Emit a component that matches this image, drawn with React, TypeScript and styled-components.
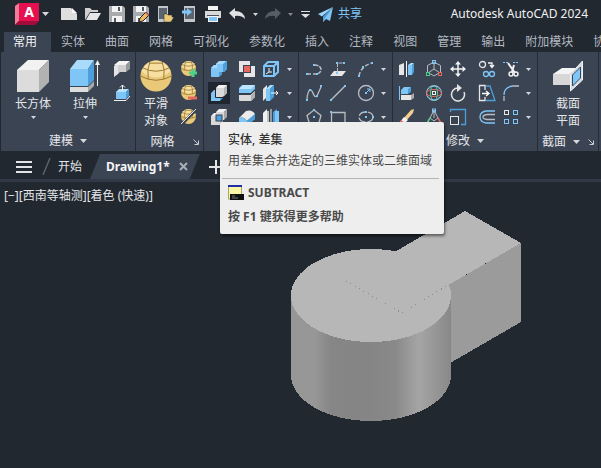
import React from "react";
import styled, { createGlobalStyle } from "styled-components";

const FONT = `"Noto Sans", "Noto Sans CJK SC", sans-serif`;
const WHITE = "#e6e6e6";
const GREY = "#b9bdc3";
const BLUE = "#7fc6f7";
const DEEP = "#4d9fdb";
const GOLD = "#e9c878";
const RED = "#e8685f";
const GREEN = "#4fd08a";

const GlobalStyle = createGlobalStyle`
  body { margin: 0; background: #212830; }
  * { box-sizing: border-box; }
  button { font: inherit; color: inherit; background: none; border: 0; padding: 0; margin: 0; }
`;

const Window = styled.div`
  position: relative;
  display: flex;
  flex-direction: column;
  min-height: 100vh;
  overflow: hidden;
  background: #212830;
  color: #e4e6e9;
  font-family: ${FONT};
  font-size: 12px;
  line-height: 16px;
`;

const TitleBar = styled.header`
  display: flex;
  align-items: center;
  height: 28px;
  padding: 0 13px 0 15px;
  white-space: nowrap;
`;

const LogoButton = styled.button`
  display: flex;
  align-items: center;
  gap: 3px;
  width: 42px;
`;

const QuickButton = styled.button<{ $width?: number }>`
  display: flex;
  align-items: center;
  justify-content: center;
  flex: none;
  width: ${(p) => p.$width ?? 24}px;
  height: 24px;
`;

const ShareButton = styled.button`
  display: flex;
  align-items: center;
  gap: 5px;
  padding-left: 4px;
  color: ${BLUE};
`;

const AppTitle = styled.h1`
  margin: 0 0 0 auto;
  font-size: 12px;
  font-weight: 400;
  color: #f0f0f0;
`;

const TabRow = styled.nav`
  display: flex;
  height: 24px;
  padding: 4px 0 0 4px;
  overflow: hidden;
`;

const Tab = styled.button<{ $active?: boolean }>`
  flex: none;
  height: 20px;
  padding: ${(p) => (p.$active ? "0 14px 0 9px" : "0 10px")};
  color: ${(p) => (p.$active ? "#f4f5f6" : "#b4b9c0")};
  background: ${(p) => (p.$active ? "#3b4453" : "transparent")};
`;

const Ribbon = styled.div`
  display: flex;
  height: 99px;
  margin-left: 1px;
  background: #3b4453;
  overflow: hidden;
`;

const Panel = styled.section<{ $width: number }>`
  display: flex;
  flex-direction: column;
  justify-content: space-between;
  flex: none;
  width: ${(p) => p.$width}px;
  border-right: 1px solid #252c36;
`;

const PanelBody = styled.div<{ $indent?: number }>`
  display: flex;
  padding-left: ${(p) => p.$indent ?? 0}px;
`;

const BigButton = styled.button<{ $width: number }>`
  display: flex;
  flex-direction: column;
  align-items: center;
  width: ${(p) => p.$width}px;
  padding-top: 8px;
`;

const BigLabel = styled.span`
  margin: 3px 0 4px;
  line-height: 17px;
`;

const ToolGrid = styled.div<{ $columns: string }>`
  display: grid;
  grid-template-columns: ${(p) => p.$columns};
  grid-auto-rows: 24px;
  align-items: center;
  justify-items: end;
  padding-top: 5px;
`;

const ToolButton = styled.button<{ $active?: boolean }>`
  display: flex;
  align-items: center;
  justify-content: center;
  width: 22px;
  height: 22px;
  background: ${(p) => (p.$active ? "#1f2630" : "transparent")};
`;

const DropButton = styled.button`
  display: flex;
  align-items: center;
  justify-content: center;
  justify-self: stretch;
  height: 22px;
`;

const PanelFooter = styled.div`
  display: flex;
  align-items: center;
  height: 20px;
`;

const PanelTitle = styled.button`
  display: flex;
  flex: 1;
  align-items: center;
  justify-content: center;
  gap: 7px;
`;

const CornerButton = styled.button`
  display: flex;
  width: 14px;
  padding-left: 4px;
`;

const FileTabs = styled.nav`
  display: flex;
  height: 31px;
  padding: 3px 0 0 16px;
  border-bottom: 3px solid #313946;
`;

const MenuButton = styled.button`
  display: flex;
  align-items: center;
  width: 16px;
`;

const SlashMark = styled.span`
  display: flex;
  align-items: center;
  margin: 0 7px 0 10px;
`;

const FileTab = styled.button`
  padding: 0 8px 0 0;
`;

const ActiveFileTab = styled.div`
  display: flex;
  align-items: center;
  gap: 9px;
  padding: 0 12px 0 16px;
  background: #3b4453;
  clip-path: polygon(10px 0, 100% 0, calc(100% - 10px) 100%, 0 100%);
  font-weight: 700;
  color: #f4f5f6;
`;

const AddButton = styled.button`
  display: flex;
  align-items: center;
  padding-left: 9px;
`;

const Viewport = styled.main`
  position: relative;
  flex: 1;
  min-height: 286px;
  padding: 6px 4px;
`;

const ViewControls = styled.div`
  display: flex;
`;

const Model = styled.svg`
  position: absolute;
  left: 290px;
  top: 28px;
`;

const Tooltip = styled.div`
  position: absolute;
  left: 220px;
  top: 122px;
  padding: 9px 5px 5px 2px;
  border-radius: 2px;
  background: #eeeeee;
  color: #4a4a4a;
  box-shadow: 1px 2px 3px rgba(0, 0, 0, 0.5);
  white-space: nowrap;
`;

const TipLine = styled.div<{ $strong?: boolean }>`
  display: flex;
  align-items: center;
  gap: 4px;
  height: 24px;
  padding: 0 7px 0 6px;
  font-weight: ${(p) => (p.$strong ? 700 : 400)};
`;

const TipHeading = styled(TipLine)`
  height: 18px;
  font-weight: 500;
  color: #333333;
`;

const TipRule = styled.hr`
  height: 1px;
  margin: 5px 0 2px;
  border: 0;
  background: #b4b4b4;
`;

/* ---------- drawings ---------- */

const Icon = ({ size = 18, children }: { size?: number; children: React.ReactNode }) => (
  <svg width={size} height={size} viewBox={`0 0 ${size} ${size}`} fill="none" aria-hidden="true">
    {children}
  </svg>
);

const Arrow = ({ big, color = "#d5d8dc" }: { big?: boolean; color?: string }) => (
  <svg width={big ? 7 : 5} height={big ? 4 : 3} viewBox="0 0 7 4" aria-hidden="true">
    <path d="M0 0H7L3.5 4Z" fill={color} />
  </svg>
);

const Corner = () => (
  <svg width="6" height="6" viewBox="0 0 6 6" fill="none" stroke="#c8ccd1" aria-hidden="true">
    <path d="M.5 .5L5 5M5.5 1.5V5.5H1.5" />
  </svg>
);

type CubeProps = { x: number; y: number; s: number; d: number; blue?: boolean };
const Cube = ({ x, y, s, d, blue }: CubeProps) => {
  const [front, top, side] = blue ? [BLUE, "#a5dafc", DEEP] : ["#d9d9d9", "#f1f1f1", "#a9a9a9"];
  return (
    <>
      <path d={`M${x} ${y + d}h${s}v${s}h${-s}z`} fill={front} />
      <path d={`M${x} ${y + d}l${d} ${-d}h${s}l${-d} ${d}z`} fill={top} />
      <path d={`M${x + s} ${y + d}l${d} ${-d}v${s}l${-d} ${d}z`} fill={side} />
    </>
  );
};

const Nodes = ({ at }: { at: number[][] }) => (
  <>
    {at.map(([x, y]) => (
      <rect key={`${x}-${y}`} x={x - 1} y={y - 1} width="2" height="2" fill={BLUE} />
    ))}
  </>
);

const Sphere = ({ cx, cy, r }: { cx: number; cy: number; r: number }) => (
  <>
    <circle cx={cx} cy={cy} r={r} fill={GOLD} />
    <path
      d={`M${cx - r * 0.94} ${cy - r * 0.3}Q${cx} ${cy + r * 0.5} ${cx + r * 0.94} ${cy - r * 0.3}L${cx + r * 0.7} ${cy - r * 0.7}Q${cx} ${cy - r * 1.3} ${cx - r * 0.7} ${cy - r * 0.7}Z`}
      fill="#f6dfa0"
    />
    <g stroke="#9c7a35" strokeWidth={r > 10 ? 1 : 0.8}>
      <path d={`M${cx - r} ${cy}Q${cx} ${cy + r * 0.55} ${cx + r} ${cy}`} />
      <path d={`M${cx - r * 0.85} ${cy - r * 0.52}Q${cx} ${cy - r * 0.1} ${cx + r * 0.85} ${cy - r * 0.52}`} />
      <path d={`M${cx - r * 0.4} ${cy - r * 0.9}Q${cx - r * 0.6} ${cy - r * 0.4} ${cx - r * 0.5} ${cy + r * 0.2}`} />
      <path d={`M${cx + r * 0.4} ${cy - r * 0.9}Q${cx + r * 0.6} ${cy - r * 0.4} ${cx + r * 0.5} ${cy + r * 0.2}`} />
      <path d={`M${cx - r * 0.45} ${cy - r * 0.83}H${cx + r * 0.45}`} />
    </g>
  </>
);

const BoxIcon = () => (
  <Icon size={32}>
    <path d="M0 10L22 10V32H0Z" fill="#dcdcdc" />
    <path d="M0 10L11 0H32L22 10Z" fill="#f2f2f2" />
    <path d="M22 10L32 0V22L22 32Z" fill="#b2b2b2" />
  </Icon>
);

const ExtrudeIcon = () => (
  <Icon size={32}>
    <path d="M1 27H19V32H1Z" fill="#dedede" />
    <path d="M19 27L25 21V26L19 32Z" fill="#a8a8a8" />
    <path d="M1 9H19V26H1Z" fill={BLUE} />
    <path d="M1 9L8 0H25L19 9Z" fill="#a9dcfc" />
    <path d="M19 9L25 0V20L19 26Z" fill={DEEP} />
    <path d="M28.5 26V3" stroke="#f2f2f2" />
    <path d="M26 5L28.500 0L31 5Z" fill="#f2f2f2" />
  </Icon>
);

const PolysolidIcon = () => (
  <Icon>
    <path d="M1 6L5 3V14L1 17Z" fill="#e4e4e4" />
    <path d="M1 5L6 1H17L13 5Z" fill="#f4f4f4" />
    <path d="M5 5H13V12H7L5 14Z" fill="#cfcfcf" />
    <path d="M13 5L17 1V9L13 12Z" fill="#989898" />
  </Icon>
);

const PressPullIcon = () => (
  <Icon>
    <path d="M3 8H13V15H3Z" fill={BLUE} />
    <path d="M3 8L6 5H16L13 8Z" fill="#b3e0fc" />
    <path d="M13 8L16 5V12L13 15Z" fill={DEEP} />
    <path d="M9.500 7V1M7 3.500L9.500 1L12 3.500M1 16.500H13L17 12" stroke="#f0f0f0" />
  </Icon>
);

const MeshIcon = ({ mark }: { mark: "more" | "less" | "refine" }) => (
  <Icon>
    <Sphere cx={8.5} cy={8.5} r={7.5} />
    {mark === "more" && <path d="M13 9V17M9 13H17" stroke={GREEN} strokeWidth="3" />}
    {mark === "less" && <path d="M8 14H17" stroke={RED} strokeWidth="3" />}
    {mark === "refine" && (
      <>
        <path d="M1 17L17 1" stroke="#3b4453" strokeWidth="3" />
        <path d="M1 16L16 1" stroke="#e6e6e6" />
      </>
    )}
  </Icon>
);

const UnionIcon = () => (
  <Icon>
    <path d="M1 9Q1 8 2 7L4 5H6V4L8 2Q9 1 10 1H16Q17 1 17 2V9L14 12H12V14L10 16Q9 17 8 17H2Q1 17 1 16Z" fill={BLUE} />
    <path d="M4 5H6V4L8 2Q9 1 10 1H16L13 4H7V8H1L4 5Z" fill="#a5dafc" />
    <path d="M13 4L17 1V9L14 12H13ZM9 12H12V14L9 17Z" fill={DEEP} />
  </Icon>
);
const SubtractIcon = () => (
  <Icon>
    <path d="M1 9L4 6H5V13Q5 14 6 14H10V17H1Z" fill={BLUE} />
    <path d="M10 14H13L10 17Z" fill={DEEP} />
    <path d="M6 5Q6 4 7 3L9 1H16Q17 1 17 2V9L14 12Q13 13 12 13H6Z" fill="#d9d9d9" />
    <path d="M6 4L9 1H17L14 4Z" fill="#f1f1f1" />
    <path d="M14 4L17 1V9L14 12Z" fill="#b5b5b5" />
  </Icon>
);
const IntersectIcon = () => (
  <Icon>
    <Cube x={1} y={5} s={9} d={3} />
    <Cube x={6} y={1} s={8} d={3} />
    <rect x="6" y="7" width="6" height="6" fill={DEEP} stroke="#3b4453" />
  </Icon>
);
const InterfereIcon = () => (
  <Icon>
    <path d="M1 1H12V12H1ZM6 6H17V17H6Z" fill={WHITE} />
    <path d="M5 5H12V6H13V13H6V12H5Z" fill="#3b4453" />
    <path d="M6 6H12V12H6Z" fill={RED} />
  </Icon>
);
const SliceIcon = () => (
  <Icon>
    <path d="M1 5Q1 4 2 3L4 1H16Q17 1 17 2V5L13 9H1Z" fill={BLUE} />
    <path d="M1 5L5 1H17L13 5Z" fill="#bfe5fd" />
    <path d="M1 11H12L17 7V13L13 17H2Q1 17 1 16Z" fill="#d8d8d8" />
    <path d="M13 11L17 7V13L13 17Z" fill="#b0b0b0" />
    <path d="M1 10H12.500L17 6" stroke="#2d3541" />
  </Icon>
);
const FilletEdgeIcon = () => (
  <Icon>
    <path d="M1 10L8 3Q14 1 17 6L9 13Q6 8 1 10Z" fill="#ececec" />
    <path d="M1 10Q6 8 9 13L17 6V11L9 17L6 14H1Z" fill={BLUE} />
    <path d="M9 13L17 6V11L9 17Z" fill={DEEP} />
  </Icon>
);
const ExtractIcon = () => (
  <Icon>
    <path d="M2 6H12V16H2ZM2 6L6 2H16L12 6M12 16L16 12V2" stroke={BLUE} strokeWidth="2" strokeLinejoin="round" />
    <path d="M7 8V12M4 14L7 12H10" stroke="#e3f3ff" />
  </Icon>
);
const ExtrudeFaceIcon = () => (
  <Icon>
    <path d="M1 5L5 1V13L1 17Z" fill="#e5e5e5" />
    <path d="M4 5L8 1H12L8 5Z" fill="#a7ddfc" />
    <path d="M4 5H8V17H4Z" fill={BLUE} />
    <path d="M8 5L12 1V13L8 17Z" fill={DEEP} />
    <path d="M9 9H16M14 7L16 9L14 11" stroke="#fff" />
  </Icon>
);
const SeparateIcon = () => (
  <Icon>
    <path d="M1 5L5 1V14L1 17Z" fill="#f1f1f1" />
    <path d="M5 3H7V16H5Z" fill="#c4c4c4" />
    <path d="M9 1V17" stroke="#f0f0f0" />
    <path d="M11 4L15 1V14L11 17Z" fill={DEEP} />
    <path d="M13 3H17V15H13Z" fill={BLUE} />
  </Icon>
);

const PolylineIcon = () => (
  <Icon>
    <path d="M2 14H7M8 14H12Q16 13 16 9Q15 5 9 5" stroke={GREY} strokeWidth="1.500" strokeDasharray="4 1" />
    <Nodes at={[[2, 14], [12, 14], [9, 5]]} />
  </Icon>
);
const PlanarIcon = () => (
  <Icon>
    <path d="M1 16L5 11H17L13 16Z" fill={WHITE} />
    <path d="M8.500 12V3H14" stroke={GREY} strokeDasharray="4 1" />
    <Nodes at={[[8, 3], [15, 3], [8, 13]]} />
  </Icon>
);
const ArcIcon = () => (
  <Icon>
    <path d="M2 16Q4 6 15 3" stroke={GREY} strokeWidth="1.500" strokeDasharray="4 2" />
    <Nodes at={[[2, 16], [6, 7], [15, 3]]} />
  </Icon>
);
const SplineIcon = () => (
  <Icon>
    <path d="M2 16C2 10 4 5 6 6S9 15 12 12L16 3" stroke={GREY} strokeWidth="1.300" />
    <Nodes at={[[2, 16], [5, 6], [12, 12], [16, 2]]} />
  </Icon>
);
const LineIcon = () => (
  <Icon>
    <path d="M2 16L16 2" stroke={GREY} strokeWidth="1.500" />
    <Nodes at={[[2, 16], [16, 2]]} />
  </Icon>
);
const CircleIcon = () => (
  <Icon>
    <circle cx="9" cy="9" r="7.500" stroke={GREY} strokeWidth="1.300" />
    <path d="M9 9L13 5M10 5H13V8" stroke={BLUE} />
    <Nodes at={[[9, 9]]} />
  </Icon>
);
const PolygonIcon = () => (
  <Icon>
    <path d="M9 2L16 7.500L13.500 16H4.500L2 7.500Z" stroke={GREY} strokeWidth="1.300" />
    <Nodes at={[[9, 9], [9, 2]]} />
  </Icon>
);
const RectIcon = () => (
  <Icon>
    <path d="M2.500 4.500H16V15.500H2.500Z" stroke={GREY} strokeWidth="1.300" />
    <Nodes at={[[2, 4], [16, 15]]} />
  </Icon>
);
const EllipseIcon = () => (
  <Icon>
    <ellipse cx="9" cy="9" rx="7" ry="5" stroke={GREY} strokeWidth="1.300" strokeDasharray="8 2" />
    <Nodes at={[[9, 9], [9, 4], [16, 9]]} />
  </Icon>
);

const MirrorIcon = () => (
  <Icon>
    <path d="M2 5L7 3V15H2Z" fill={WHITE} />
    <path d="M9.500 1V17" stroke="#f4f4f4" />
    <path d="M11 5H15V15H11Z" fill={BLUE} />
    <path d="M11 5L14 3H17L15 5Z" fill="#b3e0fc" />
    <path d="M15 5L17 3V12L15 15Z" fill={DEEP} />
  </Icon>
);
const AlignIcon = () => (
  <Icon>
    <path d="M2.500 2V16" stroke={BLUE} />
    <path d="M4 6L7 3H14L11 6V10H4Z" fill={BLUE} />
    <path d="M11 6L14 3V8L11 10Z" fill={DEEP} />
    <path d="M4 11H14V16H4Z" fill={WHITE} />
    <path d="M14 11L17 9V14L14 16Z" fill="#aaa" />
  </Icon>
);
const EraseIcon = () => (
  <Icon>
    <path d="M6 11L14 2L17 1L16 5L9 13Z" fill="#f4cf91" />
    <path d="M3 14L7 9L11 12L7 16Z" fill="#f5f5f5" />
    <path d="M2 15L4 12L8 15L6 17Z" fill={RED} />
  </Icon>
);
const MoveGizmoIcon = () => (
  <Icon>
    <path d="M9 2L15.500 5.500V12L9 16L2.500 12V5.500ZM9 9V3M9 9L3 13M9 9L15 13" stroke={GREY} />
    <rect x="7.500" y=".5" width="3" height="3" stroke={BLUE} />
    <rect x="1.500" y="12.500" width="3" height="3" stroke={GREEN} />
    <rect x="13.500" y="12.500" width="3" height="3" stroke={RED} />
  </Icon>
);
const RotateGizmoIcon = () => (
  <Icon>
    <circle cx="9" cy="9" r="7.500" stroke={GREY} />
    <ellipse cx="9" cy="9" rx="7.500" ry="3.500" stroke={RED} />
    <ellipse cx="9" cy="9" rx="3.500" ry="7.500" stroke={GREEN} />
    <path d="M2 6Q9 -2 16 6M2 12Q9 20 16 12" stroke={BLUE} />
    <rect x="7.500" y="7.500" width="3" height="3" fill="#3b4453" stroke="#eee" />
  </Icon>
);
const ScaleGizmoIcon = () => (
  <Icon>
    <path d="M9 2L5 10L2 15M9 2L13 10M9 2V10M5 10L9 13L13 10" stroke={GREY} />
    <path d="M5 10L2 15H9" stroke={GREEN} strokeWidth="1.500" />
    <path d="M13 10L16 15H9" stroke={RED} strokeWidth="1.500" />
    <rect x="7.500" y="1" width="3" height="3" stroke={BLUE} />
  </Icon>
);
const MoveIcon = () => (
  <Icon>
    <path d="M9 3V15M3 9H15" stroke="#f4f4f4" strokeWidth="1.500" />
    <path d="M9 1L12 4.500H6ZM9 17L12 13.500H6ZM1 9L4.500 6V12ZM17 9L13.500 6V12Z" fill="#f4f4f4" />
  </Icon>
);
const RotateIcon = () => (
  <Icon>
    <path d="M9 4A6.500 6.500 0 1 0 15 8" stroke="#e4e4e4" strokeWidth="1.500" />
    <path d="M8 0L13 4L8 8Z" fill="#e4e4e4" />
  </Icon>
);
const ScaleIcon = () => (
  <Icon>
    <path d="M1.500 4V1.500H16.500V16.500H12" stroke={DEEP} strokeWidth="1.300" />
    <rect x="1.500" y="8.500" width="8" height="8" stroke={WHITE} />
  </Icon>
);
const CopyIcon = () => (
  <Icon>
    <circle cx="4.500" cy="4.500" r="3" stroke={WHITE} strokeWidth="1.300" />
    <circle cx="8" cy="14" r="2.500" stroke={BLUE} strokeWidth="1.300" />
    <circle cx="14" cy="14" r="2.500" stroke={BLUE} strokeWidth="1.300" />
    <path d="M10 3H14V7M12 5L14 7.500L16 5" stroke="#f4f4f4" strokeWidth="1.300" />
  </Icon>
);
const StretchIcon = () => (
  <Icon>
    <path d="M7 6V1.500H1.500V16.500H7V13" stroke={WHITE} strokeWidth="1.300" />
    <path d="M8 2H12L17 16.500H8" stroke={DEEP} strokeWidth="1.300" />
    <path d="M4 9.500H10M8 7L11 9.500L8 12" stroke="#fff" strokeWidth="1.300" />
  </Icon>
);
const OffsetIcon = () => (
  <Icon>
    <path d="M17 3H8Q2 4 2 9T8 15H17" stroke={BLUE} strokeWidth="1.300" />
    <path d="M17 6.500H9Q5 7 5 9T9 11.500H17" stroke={GREY} strokeWidth="1.300" />
  </Icon>
);
const TrimIcon = () => (
  <Icon>
    <path d="M1 2.500H7M11 2.500H17" stroke={BLUE} strokeDasharray="2 1" />
    <path d="M6 3L13 13M12 5L10 12" stroke="#f2f2f2" strokeWidth="2" />
    <circle cx="9" cy="14" r="2" stroke="#f2f2f2" strokeWidth="1.500" />
    <circle cx="14" cy="14" r="2" stroke="#f2f2f2" strokeWidth="1.500" />
  </Icon>
);
const FilletIcon = () => (
  <Icon>
    <path d="M2 17V12M11 2H17" stroke={GREY} strokeWidth="1.300" />
    <path d="M2 11Q2 3 11 2" stroke={BLUE} strokeWidth="1.300" />
  </Icon>
);
const ArrayIcon = () => (
  <Icon>
    <rect x="2.500" y="2.500" width="4" height="4" stroke={WHITE} />
    <rect x="11.500" y="2.500" width="4" height="4" stroke={BLUE} />
    <rect x="2.500" y="11.500" width="4" height="4" stroke={BLUE} />
    <rect x="11.500" y="11.500" width="4" height="4" stroke={BLUE} />
  </Icon>
);
const SectionIcon = () => (
  <Icon size={32}>
    <path d="M1 14L10 8H26L18 14Z" fill="#f4f4f4" />
    <path d="M1 14H18V25H1Z" fill="#d7d7d7" />
    <path d="M18 14L25 9V20L18 26Z" fill="#a8a8a8" />
    <path d="M18.500 31V14L30.500 1V20Z" fill="#d3d9df" stroke="#f1f1f1" />
    <path d="M20.500 26V15L28.500 7V18Z" fill={BLUE} stroke="#34495c" />
  </Icon>
);

const LogoIcon = () => (
  <svg width="24" height="22" viewBox="0 0 24 22" aria-hidden="true">
    <path d="M0 3L4 0V18L0 22Z" fill="#f57b96" />
    <path d="M4 0H24V18H4Z" fill="#e51050" />
    <path d="M4 18H24L20 22H0Z" fill="#a30b38" />
    <text x="14" y="14" textAnchor="middle" fontFamily="Noto Sans, sans-serif" fontWeight="700" fontSize="14" fill="#fff">
      A
    </text>
  </svg>
);
const NewIcon = () => (
  <Icon>
    <path d="M1 3H11L17 9V15H1Z" fill="#dedede" />
    <path d="M12 3L17 8H12Z" fill="#f7f7f7" />
  </Icon>
);
const OpenIcon = () => (
  <Icon>
    <path d="M1 15V3H6L8 5H14V7H6Z" fill="#cfcfcf" />
    <path d="M2 15L6 8H17L13 15Z" fill="#e6e6e6" />
  </Icon>
);
const SaveIcon = ({ pencil }: { pencil?: boolean }) => (
  <Icon>
    <path d="M1 1H15L17 3V17H1Z" fill="#a9abae" />
    <path d="M4 1H14V7H4ZM4 11H14V17H4Z" fill="#f3f3f3" />
    <path d="M10 2H12V6H10ZM6 13H8V17H6Z" fill="#4f565f" />
    {pencil && (
      <>
        <path d="M7 17L8 13L14 7L17 10L11 16Z" fill="#efb75e" stroke="#212830" />
        <path d="M14 7L17 10L16 11L13 8Z" fill={RED} />
      </>
    )}
  </Icon>
);
const MobileIcon = ({ kind }: { kind: "open" | "save" }) => (
  <Icon>
    <path d={kind === "open" ? "M2 1H12V17H2Z" : "M4 1H15V17H4Z"} fill="#c3c5c8" />
    <path d={kind === "open" ? "M3 3H11V14H3Z" : "M5 3H14V14H5Z"} fill="#5b636d" />
    {kind === "open" ? (
      <path d="M8 17V9H11L12 10H16V12H18L15 17Z" fill={GOLD} stroke="#212830" strokeWidth=".5" />
    ) : (
      <path d="M2 5.500H7V3L12 7L7 11V8.500H2Z" fill={BLUE} />
    )}
  </Icon>
);
const PrintIcon = () => (
  <Icon>
    <path d="M4 1H14V5H4Z" fill="#f4f4f4" />
    <path d="M1 6H17V13H1Z" fill="#d8d8d8" />
    <path d="M3 10H15V11H3Z" fill="#4a515b" />
    <path d="M4 11H14V17H4Z" fill="#f4f4f4" />
    <path d="M5 12H13V16H5Z" fill={BLUE} />
  </Icon>
);
const UndoIcon = ({ redo }: { redo?: boolean }) => (
  <Icon>
    <path
      d={redo ? "M17 8L11 3V6Q2 6 1 14Q5 10 11 11V14Z" : "M1 8L7 3V6Q16 6 17 14Q13 10 7 11V14Z"}
      fill={redo ? "#565d67" : "#dfe1e4"}
    />
  </Icon>
);
const CustomizeIcon = () => (
  <svg width="9" height="7" viewBox="0 0 9 7" aria-hidden="true">
    <path d="M0 0H9V1H0ZM0 3H9L4.500 7Z" fill="#dcdfe2" />
  </svg>
);
const ShareIcon = () => (
  <svg width="15" height="15" viewBox="0 0 15 15" aria-hidden="true">
    <path d="M15 0L0 7L4 9.500Z" fill="#9bd5fb" />
    <path d="M15 0L5 10V15L8 12L12 14Z" fill={BLUE} />
    <path d="M15 0L5 10V15L7 11Z" fill={DEEP} />
  </svg>
);
const CommandIcon = () => (
  <svg width="16" height="16" viewBox="0 0 16 16" aria-hidden="true">
    <rect x=".5" y="1" width="13" height="13" fill="#fbf6a5" stroke="#a5a56f" />
    <path d="M0 0H14V2H0Z" fill="#1f2fa8" />
    <path d="M2 9H16V15H2Z" fill="#111" />
    <path d="M4 11H7M4 13H10" stroke="#777" />
  </svg>
);

/* ---------- data ---------- */

const ribbonTabs = ["常用", "实体", "曲面", "网格", "可视化", "参数化", "插入", "注释", "视图", "管理", "输出", "附加模块", "协作"];

type Tool = [string, React.ReactNode];

const quickTools: Tool[] = [
  ["新建", <NewIcon />],
  ["打开", <OpenIcon />],
  ["保存", <SaveIcon />],
  ["另存为", <SaveIcon pencil />],
  ["从移动设备打开", <MobileIcon kind="open" />],
  ["保存到移动设备", <MobileIcon kind="save" />],
  ["打印", <PrintIcon />],
  ["放弃", <UndoIcon />],
];

const solidRows: Tool[][] = [
  [["并集", <UnionIcon />], ["干涉", <InterfereIcon />], ["提取边", <ExtractIcon />]],
  [["差集", <SubtractIcon />], ["剖切", <SliceIcon />], ["拉伸面", <ExtrudeFaceIcon />]],
  [["交集", <IntersectIcon />], ["圆角边", <FilletEdgeIcon />], ["分割", <SeparateIcon />]],
];

const drawRows: Tool[][] = [
  [["多段线", <PolylineIcon />], ["平面曲面", <PlanarIcon />], ["圆弧", <ArcIcon />]],
  [["样条曲线", <SplineIcon />], ["直线", <LineIcon />], ["圆", <CircleIcon />]],
  [["多边形", <PolygonIcon />], ["矩形", <RectIcon />], ["椭圆", <EllipseIcon />]],
];

const modifyRows: Tool[][] = [
  [["三维镜像", <MirrorIcon />], ["三维移动", <MoveGizmoIcon />], ["移动", <MoveIcon />], ["复制", <CopyIcon />], ["修剪", <TrimIcon />]],
  [["三维对齐", <AlignIcon />], ["三维旋转", <RotateGizmoIcon />], ["旋转", <RotateIcon />], ["拉伸", <StretchIcon />], ["圆角", <FilletIcon />]],
  [["删除", <EraseIcon />], ["三维缩放", <ScaleGizmoIcon />], ["缩放", <ScaleIcon />], ["偏移", <OffsetIcon />], ["阵列", <ArrayIcon />]],
];

const Tools = ({ rows, columns, active }: { rows: Tool[][]; columns: string; active?: string }) => (
  <ToolGrid $columns={columns}>
    {rows.map((row, i) => (
      <React.Fragment key={i}>
        {row.map(([name, icon]) => (
          <ToolButton key={name} aria-label={name} $active={name === active}>
            {icon}
          </ToolButton>
        ))}
        <DropButton aria-label="更多">
          <Arrow />
        </DropButton>
      </React.Fragment>
    ))}
  </ToolGrid>
);

const Footer = ({ title, arrow, corner }: { title: string; arrow?: boolean; corner?: boolean }) => (
  <PanelFooter>
    <PanelTitle>
      {title}
      {arrow && <Arrow big />}
    </PanelTitle>
    {corner && (
      <CornerButton aria-label={`${title}设置`}>
        <Corner />
      </CornerButton>
    )}
  </PanelFooter>
);

const SolidModel = () => (
  <Model width="232" height="212" viewBox="0 0 232 212" role="img" aria-label="三维模型" shapeRendering="crispEdges">
    <defs>
      <linearGradient id="side" x1="0" x2="1" y1="0" y2="0">
        <stop offset="0" stopColor="#969696" />
        <stop offset=".15" stopColor="#979797" />
        <stop offset=".25" stopColor="#868686" />
        <stop offset=".48" stopColor="#858585" />
        <stop offset=".65" stopColor="#898989" />
        <stop offset=".8" stopColor="#a5a5a5" />
        <stop offset=".9" stopColor="#979797" />
        <stop offset="1" stopColor="#888888" />
      </linearGradient>
    </defs>
    <path d="M148 81L231 33V112L148 160Z" fill="#9b9b9b" />
    <path d="M1 86V165A80 46 0 0 0 161 165V86Z" fill="url(#side)" />
    <ellipse cx="81" cy="85.500" rx="80" ry="46.500" fill="#b7b7b7" />
    <path d="M108 40L175 1L231 33L160 74L112 103L56 71Z" fill="#b7b7b7" />
    <path d="M56 71L112 103L158 75" fill="none" stroke="#8c8c8c" strokeDasharray="1 4" />
  </Model>
);

export default function App() {
  return (
    <Window>
      <GlobalStyle />
      <TitleBar>
        <LogoButton aria-label="应用程序菜单">
          <LogoIcon />
          <Arrow big />
        </LogoButton>
        {quickTools.map(([name, icon]) => (
          <QuickButton key={name} aria-label={name}>
            {icon}
          </QuickButton>
        ))}
        <QuickButton $width={12} aria-label="放弃列表">
          <Arrow />
        </QuickButton>
        <QuickButton aria-label="重做">
          <UndoIcon redo />
        </QuickButton>
        <QuickButton $width={11} aria-label="重做列表">
          <Arrow color="#858b93" />
        </QuickButton>
        <QuickButton $width={18} aria-label="自定义">
          <CustomizeIcon />
        </QuickButton>
        <ShareButton>
          <ShareIcon />
          共享
        </ShareButton>
        <AppTitle>Autodesk AutoCAD 2024</AppTitle>
      </TitleBar>

      <TabRow>
        {ribbonTabs.map((tab, i) => (
          <Tab key={tab} $active={i === 0}>
            {tab}
          </Tab>
        ))}
      </TabRow>

      <Ribbon>
        <Panel $width={135}>
          <PanelBody $indent={6}>
            <BigButton $width={52}>
              <BoxIcon />
              <BigLabel>长方体</BigLabel>
              <Arrow />
            </BigButton>
            <BigButton $width={52}>
              <ExtrudeIcon />
              <BigLabel>拉伸</BigLabel>
              <Arrow />
            </BigButton>
            <ToolGrid $columns="22px">
              <ToolButton aria-label="多段体">
                <PolysolidIcon />
              </ToolButton>
              <ToolButton aria-label="按住并拖动">
                <PressPullIcon />
              </ToolButton>
            </ToolGrid>
          </PanelBody>
          <Footer title="建模" arrow />
        </Panel>

        <Panel $width={68}>
          <PanelBody>
            <BigButton $width={40}>
              <Icon size={32}>
                <Sphere cx={16} cy={16} r={15.5} />
              </Icon>
              <BigLabel>
                平滑
                <br />
                对象
              </BigLabel>
            </BigButton>
            <ToolGrid $columns="24px">
              <ToolButton aria-label="提高平滑度">
                <MeshIcon mark="more" />
              </ToolButton>
              <ToolButton aria-label="降低平滑度">
                <MeshIcon mark="less" />
              </ToolButton>
              <ToolButton aria-label="优化网格">
                <MeshIcon mark="refine" />
              </ToolButton>
            </ToolGrid>
          </PanelBody>
          <Footer title="网格" corner />
        </Panel>

        <Panel $width={95}>
          <Tools rows={solidRows} columns="26px 28px 24px 14px" active="差集" />
        </Panel>
        <Panel $width={94}>
          <Tools rows={drawRows} columns="26px 24px 28px 13px" />
        </Panel>
        <Panel $width={145}>
          <Tools rows={modifyRows} columns="24px 28px 24px 29px 24px 12px" />
          <Footer title="修改" arrow />
        </Panel>

        <Panel $width={61}>
          <PanelBody>
            <BigButton $width={60}>
              <SectionIcon />
              <BigLabel>
                截面
                <br />
                平面
              </BigLabel>
            </BigButton>
          </PanelBody>
          <Footer title="截面" arrow corner />
        </Panel>
      </Ribbon>

      <FileTabs>
        <MenuButton aria-label="菜单">
          <svg width="16" height="12" viewBox="0 0 16 12" aria-hidden="true">
            <path d="M0 1H16M0 6H16M0 11H16" stroke="#e2e4e7" strokeWidth="2" />
          </svg>
        </MenuButton>
        <SlashMark>
          <svg width="9" height="17" viewBox="0 0 9 17" aria-hidden="true">
            <path d="M1 17L8 0" stroke="#59616d" strokeWidth="1.500" />
          </svg>
        </SlashMark>
        <FileTab>开始</FileTab>
        <ActiveFileTab>
          Drawing1*
          <button aria-label="关闭">
            <svg width="9" height="9" viewBox="0 0 9 9" aria-hidden="true">
              <path d="M1 1L8 8M8 1L1 8" stroke="#a9afb7" strokeWidth="2" />
            </svg>
          </button>
        </ActiveFileTab>
        <AddButton aria-label="新图形">
          <svg width="14" height="14" viewBox="0 0 14 14" aria-hidden="true">
            <path d="M7 0V14M0 7H14" stroke="#e2e4e7" strokeWidth="2" />
          </svg>
        </AddButton>
      </FileTabs>

      <Viewport>
        <ViewControls>
          <button>[−]</button>
          <button>[西南等轴测]</button>
          <button>[着色 (快速)]</button>
        </ViewControls>
        <SolidModel />
      </Viewport>

      <Tooltip role="tooltip">
        <TipHeading>实体, 差集</TipHeading>
        <TipLine>用差集合并选定的三维实体或二维面域</TipLine>
        <TipRule />
        <TipLine $strong>
          <CommandIcon />
          SUBTRACT
        </TipLine>
        <TipLine $strong>按 F1 键获得更多帮助</TipLine>
      </Tooltip>
    </Window>
  );
}
